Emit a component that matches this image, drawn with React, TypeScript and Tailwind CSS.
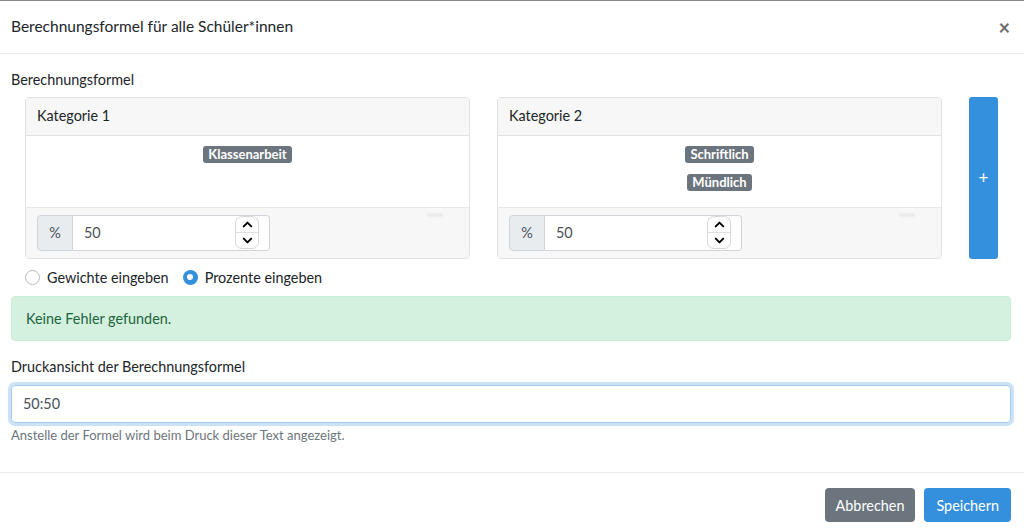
import { ChevronUp, ChevronDown } from "lucide-react";

function Badge({ label }: { label: string }) {
    return (
        <span className="rounded-[3px] bg-[#6c757d] px-[5px] text-[13px] font-bold leading-[17px] text-white">
            {label}
        </span>
    );
}

function Kategorie({ title, badges }: { title: string; badges: string[] }) {
    return (
        <div className="flex w-[445px] flex-col overflow-hidden rounded-[4px] border border-[#e2e2e2] bg-white">
            <div className="flex h-[38px] items-center border-b border-[#e2e2e2] bg-[#f7f7f7] px-[11px]">{title}</div>
            <div className="flex h-[71px] flex-col items-center gap-[11px] pt-[10px]">
                {badges.map((b) => (
                    <Badge key={b} label={b} />
                ))}
            </div>
            <div className="relative flex h-[51px] items-start border-t border-[#e8e8e8] bg-[#f7f7f7] px-[11px] pt-[7px]">
                <div className="flex h-[36px] w-[233px]">
                    <div className="flex w-[36px] items-center justify-center rounded-l-[4px] border border-[#ced4da] bg-[#e9ecef] text-[#495057]">%</div>
                    <div className="relative flex flex-1 items-center rounded-r-[4px] border border-l-0 border-[#ced4da] bg-white pl-[11px] text-[#495057]">
                        50
                        <div className="absolute right-[10px] top-[0px] flex h-[33px] w-[24px] flex-col items-center justify-center rounded-[7px] border border-[#d8d8d8] bg-white">
                            <ChevronUp size={15} strokeWidth={3.2} className="text-black" />
                            <div className="h-px w-full bg-[#e0e0e0]" />
                            <ChevronDown size={15} strokeWidth={3.2} className="text-black" />
                        </div>
                    </div>
                </div>
                <div className="absolute right-[26px] top-[6px] h-[2px] w-[16px] rounded-full bg-[#e0e0e0] blur-[1px]" />
            </div>
        </div>
    );
}

function Radio({ checked, label }: { checked: boolean; label: string }) {
    return (
        <label className="flex items-center gap-[7px]">
            {checked ? (
                <span className="flex h-[15px] w-[15px] items-center justify-center rounded-full bg-[#3490dc]">
                    <span className="h-[6px] w-[6px] rounded-full bg-white" />
                </span>
            ) : (
                <span className="h-[15px] w-[15px] rounded-full border border-[#b8b8b8] bg-white" />
            )}
            {label}
        </label>
    );
}

export default function App() {
    return (
        <div className="h-[531px] w-[1024px] overflow-hidden border-t border-[#8a8a8a] bg-white text-[14.4px] text-[#212529]" style={{ fontFamily: "Lato, 'Noto Sans', sans-serif" }}>
            <div className="flex h-[53px] items-center justify-between border-b border-[#e9ecef] px-[11px]">
                <h5 className="text-[15.5px]">Berechnungsformel für alle Schüler*innen</h5>
                <span className="mr-[3px] text-[20px] font-bold leading-none text-[#6b6b6b]">×</span>
            </div>

            <div className="pl-[11px] pr-[13px] pt-[15px]">
                <div className="mb-[6px]">Berechnungsformel</div>
                <div className="flex gap-[27px] pl-[14px]">
                    <Kategorie title="Kategorie 1" badges={["Klassenarbeit"]} />
                    <Kategorie title="Kategorie 2" badges={["Schriftlich", "Mündlich"]} />
                    <button className="flex w-[29px] items-center justify-center rounded-[3px] bg-[#3490dc] text-[17px] text-white">+</button>
                </div>

                <div className="mt-[8px] flex gap-[14px] pl-[14px]">
                    <Radio checked={false} label="Gewichte eingeben" />
                    <Radio checked={true} label="Prozente eingeben" />
                </div>

                <div className="mt-[8px] flex h-[45px] items-center rounded-[4px] border border-[#c6eed4] bg-[#d4f1e0] px-[14px] text-[#1d643b]">
                    Keine Fehler gefunden.
                </div>

                <div className="mb-[7px] mt-[15px]">Druckansicht der Berechnungsformel</div>
                <div className="flex h-[38px] items-center rounded-[4px] border border-[#a1cbef] px-[11px] text-[#495057] shadow-[0_0_0_3px_rgba(52,144,220,0.25)]">
                    50:50
                </div>
                <div className="mt-[3px] text-[13px] text-[#6c757d]">Anstelle der Formel wird beim Druck dieser Text angezeigt.</div>
            </div>

            <div className="mt-[27px] flex justify-end gap-[9px] border-t border-[#e9ecef] px-[13px] pt-[15px]">
                <button className="h-[34px] rounded-[4px] bg-[#6c757d] px-[11px] text-white">Abbrechen</button>
                <button className="h-[34px] rounded-[4px] bg-[#3490dc] px-[12px] text-white">Speichern</button>
            </div>
        </div>
    );
}
